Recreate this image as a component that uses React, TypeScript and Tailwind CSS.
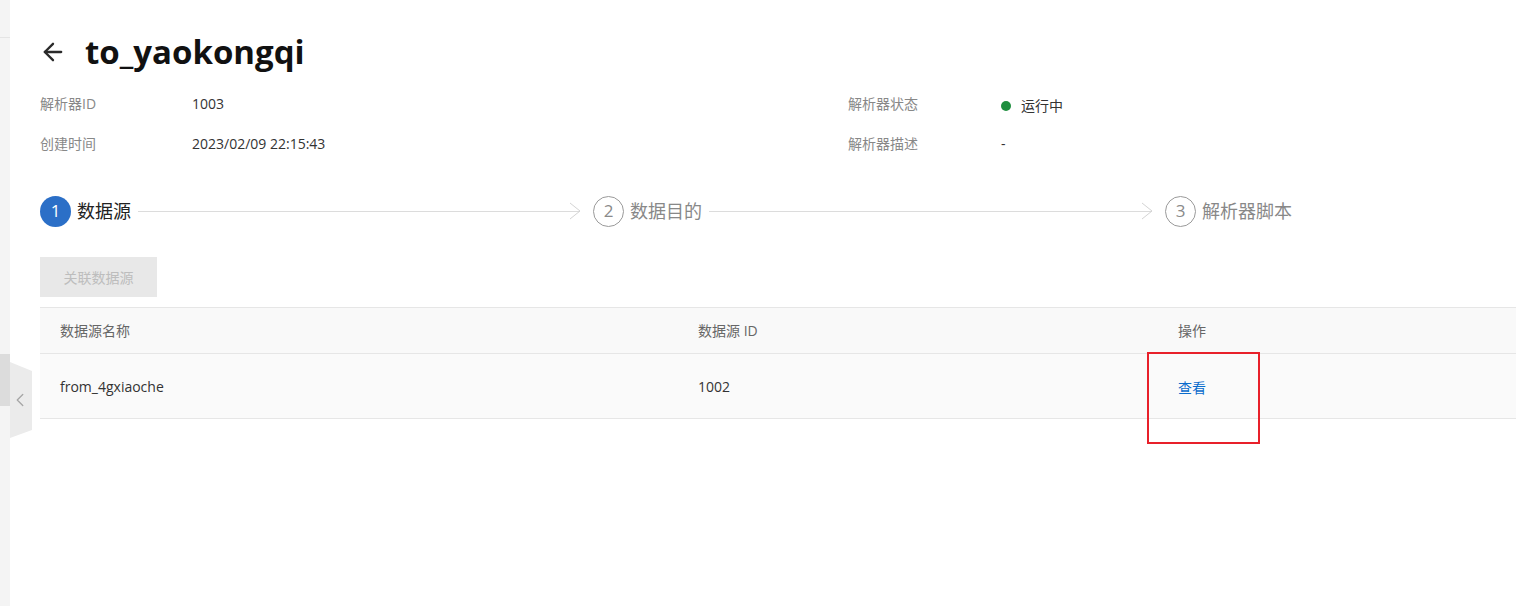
import { ArrowLeft, ChevronLeft } from 'lucide-react';

const font = '"Open Sans","Noto Sans CJK SC",sans-serif';

function Chevron() {
    return (
        <svg width="14" height="20" viewBox="0 0 14 20" className="shrink-0 -ml-[12px]">
            <path d="M2 2 L12 10 L2 18" fill="none" stroke="#d4d4d4" strokeWidth="1" />
        </svg>
    );
}

function Step({ n, title, active, last, width }: { n: number; title: string; active?: boolean; last?: boolean; width?: string }) {
    return (
        <div className={`flex items-center ${last ? '' : 'pr-[11px]'} ${width ?? ''}`}>
            <div
                className={
                    active
                        ? 'flex h-[31px] w-[31px] shrink-0 items-center justify-center rounded-full bg-[#2b6fc7] text-[17px] text-white'
                        : 'flex h-[31px] w-[31px] shrink-0 items-center justify-center rounded-full border border-[#9a9a9a] text-[17px] text-[#8a8a8a]'
                }
            >
                {n}
            </div>
            <span className={`ml-[6px] whitespace-nowrap text-[18px] ${active ? 'text-[#222]' : 'text-[#888]'}`}>{title}</span>
            {!last && (
                <>
                    <div className="ml-[7px] h-px flex-1 bg-[#dcdcdc]" />
                    <Chevron />
                </>
            )}
        </div>
    );
}

export default function App() {
    return (
        <div className="flex min-h-[606px] overflow-hidden bg-white" style={{ fontFamily: font }}>
            {/* side strip */}
            <aside className="relative w-[10px] shrink-0 bg-[#f4f4f4]">
                <div className="mt-[37px] h-px bg-[#e4e4e4]" />
                <div className="mt-[316px] h-[52px] bg-[#dcdcdc]" />
                <div className="absolute left-[10px] top-[352px] z-10 flex h-[86px] w-[22px] items-center justify-center bg-[#ebebeb] [clip-path:polygon(0_10px,100%_19px,100%_78px,0_100%)]">
                    <ChevronLeft size={22} strokeWidth={1.5} className="ml-[-3px] mt-[10px] text-[#a8a8a8]" />
                </div>
            </aside>

            <main className="flex-1 pl-[30px]">
                {/* breadcrumb, mostly scrolled out */}
                <div className="-mt-[17px] flex h-[20px] items-end gap-3 text-[14px] leading-[20px] text-[#999]">
                    <span className="ml-[62px]">物联网</span>
                    <span>/</span>
                    <span>规则引擎</span>
                    <span>/</span>
                    <span>数据解析</span>
                    <span className="text-[#666]">/ 解析器详情页</span>
                </div>

                {/* title */}
                <div className="mt-[29px] flex h-[40px] items-center">
                    <ArrowLeft size={28} strokeWidth={2} className="-ml-[1px] text-[#2a2a2a]" />
                    <h1 className="ml-[18px] text-[33px] font-bold leading-[40px] text-[#111]">to_yaokongqi</h1>
                </div>

                {/* info */}
                <div className="mt-[11px] grid grid-cols-[808px_1fr] text-[14px]">
                    <div className="flex h-10 items-center">
                        <span className="w-[152px] text-[#888]">解析器ID</span>
                        <span className="text-[#333]">1003</span>
                    </div>
                    <div className="flex h-10 items-center">
                        <span className="w-[153px] text-[#888]">解析器状态</span>
                        <span className="mt-[5px] flex items-center text-[#333]">
                            <span className="mr-[10px] h-[10px] w-[10px] rounded-full bg-[#1e8e3e]" />
                            运行中
                        </span>
                    </div>
                    <div className="flex h-10 items-center">
                        <span className="w-[152px] text-[#888]">创建时间</span>
                        <span className="text-[#333]">2023/02/09 22:15:43</span>
                    </div>
                    <div className="flex h-10 items-center">
                        <span className="w-[153px] text-[#888]">解析器描述</span>
                        <span className="text-[#333]">-</span>
                    </div>
                </div>

                {/* steps */}
                <div className="mt-[32px] flex h-[32px] items-center">
                    <Step n={1} title="数据源" active width="w-[553px]" />
                    <Step n={2} title="数据目的" width="w-[572px]" />
                    <Step n={3} title="解析器脚本" last />
                </div>

                {/* action */}
                <button className="mt-[30px] flex h-10 w-[117px] items-center justify-center bg-[#e8e8e8] text-[14px] text-[#bdbdbd]">
                    关联数据源
                </button>

                {/* table */}
                <div className="mt-[10px] text-[14px]">
                    <div className="flex h-[47px] items-center border-y border-[#e6e6e6] bg-[#f9f9f9] text-[#666]">
                        <div className="w-[638px] pl-5">数据源名称</div>
                        <div className="w-[480px] pl-5">数据源 ID</div>
                        <div className="flex-1 pl-5">操作</div>
                    </div>
                    <div className="flex h-[65px] items-center border-b border-[#e6e6e6] bg-[#fafafa] text-[#333]">
                        <div className="w-[638px] pl-5">from_4gxiaoche</div>
                        <div className="w-[480px] pl-5">1002</div>
                        <div className="relative flex-1 pl-5">
                            <span className="relative top-px cursor-pointer text-[#0a6ccc]">查看</span>
                            <div className="pointer-events-none absolute -left-[11px] -top-[24px] h-[92px] w-[113px] border-2 border-[#e8202a]" />
                        </div>
                    </div>
                </div>
            </main>
        </div>
    );
}
